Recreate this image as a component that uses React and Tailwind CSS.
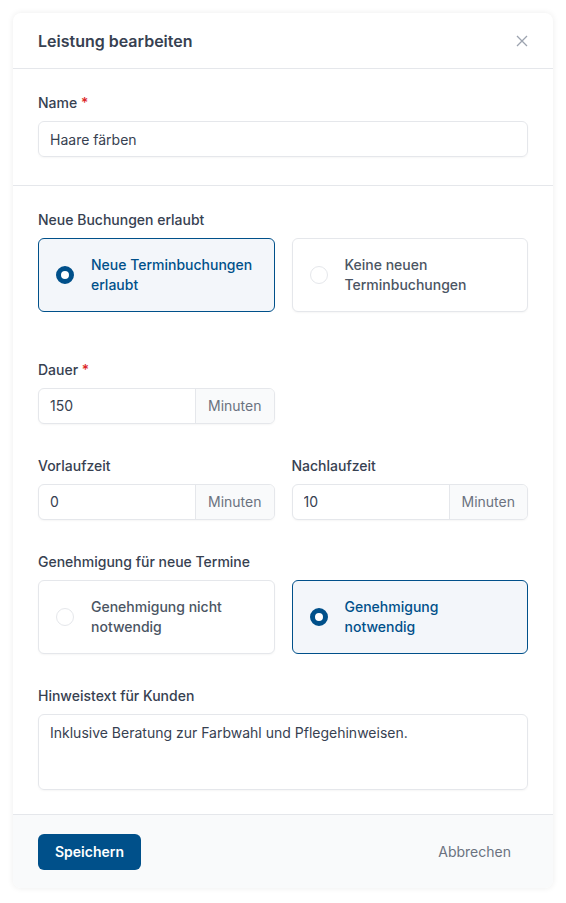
import React, { useState } from 'react';

const FONT = { fontFamily: 'Inter, "Noto Sans", sans-serif' };

function Label({ children, required }) {
  return (
    <label className="block text-sm font-medium text-[#374151] leading-5 mb-2">
      {children}
      {required && <span className="text-[#dc2626]"> *</span>}
    </label>
  );
}

function RadioCard({ checked, onClick, children }) {
  return (
    <button
      type="button"
      onClick={onClick}
      className={`flex items-center h-[74px] rounded-md border pl-[17px] pr-4 text-left ${
        checked
          ? 'border-[#00508a] bg-[#f3f6fa]'
          : 'border-[#e5e7eb] bg-white shadow-[0_1px_2px_rgba(0,0,0,0.04)]'
      }`}
    >
      <span
        className={`shrink-0 w-[18px] h-[18px] rounded-full ${
          checked ? 'border-[5px] border-[#00508a] bg-white' : 'border border-[#e5e7eb] bg-white'
        }`}
      />
      <span
        className={`ml-[17px] text-sm font-medium leading-5 ${
          checked ? 'text-[#00508a]' : 'text-[#4b5563]'
        }`}
      >
        {children}
      </span>
    </button>
  );
}

function MinutesInput({ value }) {
  return (
    <div className="flex h-9 rounded-md border border-[#e5e7eb] bg-white overflow-hidden shadow-[0_1px_2px_rgba(0,0,0,0.04)]">
      <input
        defaultValue={value}
        className="flex-1 min-w-0 pl-[11px] pr-3 text-sm text-[#374151] outline-none bg-transparent"
        style={FONT}
      />
      <span className="flex items-center px-3 border-l border-[#e5e7eb] bg-[#f9fafb] text-sm text-[#6b7280]">
        Minuten
      </span>
    </div>
  );
}

export default function App() {
  const [booking, setBooking] = useState('yes');
  const [approval, setApproval] = useState('yes');

  return (
    <div className="min-h-screen bg-white p-[13px] pb-[14px]" style={FONT}>
      <div className="w-[540px] rounded-lg bg-white shadow-[0_0_6px_rgba(0,0,0,0.08)] overflow-hidden">
        {/* Header */}
        <div className="flex items-center justify-between h-[56px] px-[25px] border-b border-[#e5e7eb]">
          <h2 className="text-base font-semibold text-[#374151]">Leistung bearbeiten</h2>
          <button type="button" className="text-[#9ca3af] mr-[-1px]">
            <svg width="14" height="14" viewBox="0 0 14 14" fill="none" stroke="currentColor" strokeWidth="1.3">
              <path d="M2 2l10 10M12 2L2 12" />
            </svg>
          </button>
        </div>

        {/* Name */}
        <div className="px-[25px] pt-6 pb-7 border-b border-[#e5e7eb]">
          <Label required>Name</Label>
          <input
            defaultValue="Haare färben"
            className="w-full h-9 pl-[11px] pr-3 rounded-md border border-[#e5e7eb] text-sm text-[#374151] outline-none shadow-[0_1px_2px_rgba(0,0,0,0.04)]"
            style={FONT}
          />
        </div>

        {/* Body */}
        <div className="px-[25px] pt-6 pb-6">
          <Label>Neue Buchungen erlaubt</Label>
          <div className="grid grid-cols-2 gap-[17px]">
            <RadioCard checked={booking === 'yes'} onClick={() => setBooking('yes')}>
              Neue Terminbuchungen erlaubt
            </RadioCard>
            <RadioCard checked={booking === 'no'} onClick={() => setBooking('no')}>
              Keine neuen Terminbuchungen
            </RadioCard>
          </div>

          <div className="mt-12 grid grid-cols-2 gap-[17px]">
            <div>
              <Label required>Dauer</Label>
              <MinutesInput value="150" />
            </div>
          </div>

          <div className="mt-8 grid grid-cols-2 gap-[17px]">
            <div>
              <Label>Vorlaufzeit</Label>
              <MinutesInput value="0" />
            </div>
            <div>
              <Label>Nachlaufzeit</Label>
              <MinutesInput value="10" />
            </div>
          </div>

          <div className="mt-8">
            <Label>Genehmigung für neue Termine</Label>
            <div className="grid grid-cols-2 gap-[17px]">
              <RadioCard checked={approval === 'no'} onClick={() => setApproval('no')}>
                Genehmigung nicht notwendig
              </RadioCard>
              <RadioCard checked={approval === 'yes'} onClick={() => setApproval('yes')}>
                Genehmigung notwendig
              </RadioCard>
            </div>
          </div>

          <div className="mt-8">
            <Label>Hinweistext für Kunden</Label>
            <textarea
              defaultValue="Inklusive Beratung zur Farbwahl und Pflegehinweisen."
              className="block w-full h-[76px] pl-[11px] pr-3 py-2 rounded-md border border-[#e5e7eb] text-sm leading-5 text-[#374151] outline-none resize-none shadow-[0_1px_2px_rgba(0,0,0,0.04)]"
              style={FONT}
            />
          </div>
        </div>

        {/* Footer */}
        <div className="flex items-center justify-between h-[74px] px-[25px] border-t border-[#e5e7eb] bg-[#f9fafb]">
          <button
            type="button"
            className="h-9 px-[17px] rounded-md bg-[#00508a] text-sm font-semibold text-white"
          >
            Speichern
          </button>
          <button type="button" className="px-[17px] text-sm text-[#6b7280]">
            Abbrechen
          </button>
        </div>
      </div>
    </div>
  );
}
